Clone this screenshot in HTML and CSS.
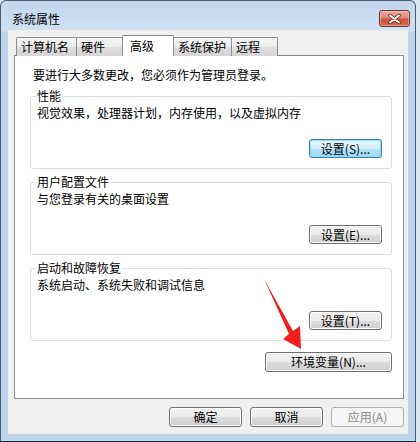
FILE: index.html
```html
<!DOCTYPE html>
<html lang="zh-CN">
<head>
<meta charset="utf-8">
<title>系统属性</title>
<link rel="stylesheet" href="styles.css">
</head>
<body>
<div class="window">
  <div class="titlebar">
    <span class="title">系统属性</span>
    <button class="close" aria-label="关闭">
      <svg width="13" height="10" viewBox="0 0 13 10"><path d="M2 1.5 L11 8.5 M11 1.5 L2 8.5" stroke="#5a2a22" stroke-width="3.4" stroke-linecap="round"/><path d="M2 1.5 L11 8.5 M11 1.5 L2 8.5" stroke="#ffffff" stroke-width="1.8" stroke-linecap="round"/></svg>
    </button>
  </div>
  <div class="client">
    <div class="tabs">
      <div class="tab w1">计算机名</div>
      <div class="tab w2">硬件</div>
      <div class="tab active w3">高级</div>
      <div class="tab w4">系统保护</div>
      <div class="tab w5">远程</div>
    </div>
    <div class="panel">
      <p class="intro">要进行大多数更改，您必须作为管理员登录。</p>
      <fieldset class="group">
        <legend>性能</legend>
        <p class="desc">视觉效果，处理器计划，内存使用，以及虚拟内存</p>
        <div class="btnrow"><button class="btn default">设置(S)...</button></div>
      </fieldset>
      <fieldset class="group">
        <legend>用户配置文件</legend>
        <p class="desc">与您登录有关的桌面设置</p>
        <div class="btnrow"><button class="btn">设置(E)...</button></div>
      </fieldset>
      <fieldset class="group">
        <legend>启动和故障恢复</legend>
        <p class="desc">系统启动、系统失败和调试信息</p>
        <div class="btnrow"><button class="btn">设置(T)...</button></div>
      </fieldset>
      <div class="envrow"><button class="btn env">环境变量(N)...</button></div>
    </div>
    <div class="footer">
      <button class="btn foot">确定</button>
      <button class="btn foot">取消</button>
      <button class="btn foot" disabled>应用(A)</button>
    </div>
  </div>
  <svg class="arrow" width="420" height="442" viewBox="0 0 420 442">
    <polygon points="264,279 293,331 300,326 301,349 283,339 289,334" fill="#ef2020"/>
  </svg>
</div>
</body>
</html>
```
FILE: styles.css
```css
* { box-sizing: border-box; }
html, body {
  margin: 0;
  padding: 0;
}
body {
  width: 420px;
  height: 442px;
  overflow: hidden;
  background: #dbe5ef;
  font-family: "Noto Sans CJK SC", "Noto Sans", sans-serif;
  font-size: 12px;
  line-height: 14px;
  color: #000;
}
.window {
  position: relative;
  width: 416px;
  height: 442px;
  border: 1px solid #4a5e70;
  border-bottom-color: #15303a;
  border-radius: 6px 6px 0 0;
  background: linear-gradient(to bottom, #c2d6ee 0px, #cfe0f3 30px, #bdd4ec 31px, #bdd4ec 100%);
  padding: 0 7px 0 7px;
  display: flex;
  flex-direction: column;
}
.titlebar {
  height: 29px;
  display: flex;
  align-items: flex-start;
  padding-left: 4px;
}
.title {
  margin-top: 11px;
  color: #000;
}
.close {
  margin-left: auto;
  margin-top: 9px;
  margin-right: -2px;
  width: 31px;
  height: 17px;
  padding: 0;
  border: 1px solid #6e3228;
  border-radius: 3px;
  background: linear-gradient(to bottom, #e9a99b 0%, #dc8a78 45%, #c9503a 55%, #d36a50 100%);
  box-shadow: inset 0 0 0 1px rgba(255, 220, 210, 0.45);
  display: flex;
  align-items: center;
  justify-content: center;
}
.close svg { display: block; }
.client {
  width: 400px;
  height: 404px;
  background: #f0f0f0;
  padding: 6px 4px 0 6px;
}
.tabs {
  position: relative;
  z-index: 1;
  display: flex;
  align-items: flex-end;
  height: 20px;
  padding-left: 2px;
  margin-bottom: -1px;
}
.tab {
  height: 19px;
  border: 1px solid #898c95;
  border-bottom: none;
  border-radius: 2px 2px 0 0;
  background: linear-gradient(to bottom, #f7f7f7 0%, #ececec 50%, #dedede 50%, #d5d5d5 100%);
  padding: 2px 0 0 4px;
  margin-left: -1px;
  white-space: nowrap;
}
.tab.w1 { width: 61px; margin-left: 0; }
.tab.w2 { width: 47px; }
.tab.w3 { width: 52px; }
.tab.w4 { width: 59px; }
.tab.w5 { width: 47px; }
.tab.active {
  height: 21px;
  background: #fff;
  padding: 3px 0 0 7px;
  margin-right: -1px;
}
.tab.active + .tab { margin-left: 0; }
.panel {
  width: 390px;
  height: 344px;
  border: 1px solid #898c95;
  background: #fff;
  padding: 12px 11px 0 15px;
}
.intro {
  margin: 0 0 0 3px;
}
.group {
  margin: 6px 0 0 0;
  width: 362px;
  border: 1px solid #d5dfe5;
  border-radius: 3px;
  padding: 0 9px 10px 6px;
  min-inline-size: 0;
}
.panel .intro + .group { margin-top: 7px; }
.group legend {
  padding: 0 1px;
  margin-left: -1px;
  line-height: 14px;
}
.desc {
  margin: 3px 0 0 0;
}
.btnrow {
  display: flex;
  justify-content: flex-end;
  margin-top: 19px;
}
.btn {
  font-family: "Noto Sans CJK SC", "Noto Sans", sans-serif;
  font-size: 12px;
  line-height: 14px;
  color: #000;
  width: 73px;
  height: 19px;
  padding: 0;
  border: 1px solid #707070;
  border-radius: 3px;
  background: linear-gradient(to bottom, #f2f2f2 0%, #ebebeb 50%, #dddddd 50%, #cfcfcf 100%);
  box-shadow: inset 0 0 0 1px #fcfcfc;
  white-space: nowrap;
}
.btn.default {
  border-color: #3c7fb1;
  background: linear-gradient(to bottom, #e5f6fe 0%, #d2effd 50%, #b5e4fb 50%, #9fd8f6 100%);
  box-shadow: inset 0 0 0 1px #8fdcfb;
}
.envrow {
  display: flex;
  justify-content: flex-end;
  margin-top: 11px;
  width: 362px;
}
.btn.env {
  width: 127px;
  height: 20px;
}
.footer {
  display: flex;
  justify-content: flex-end;
  gap: 8px;
  margin-top: 8px;
}
.btn.foot {
  height: 20px;
  width: 73px;
}
.btn:disabled {
  color: #8b8b8b;
  border-color: #adb2b5;
  background: #f4f4f4;
  box-shadow: none;
}
.arrow {
  position: absolute;
  left: -1px;
  top: -1px;
  pointer-events: none;
}
```
